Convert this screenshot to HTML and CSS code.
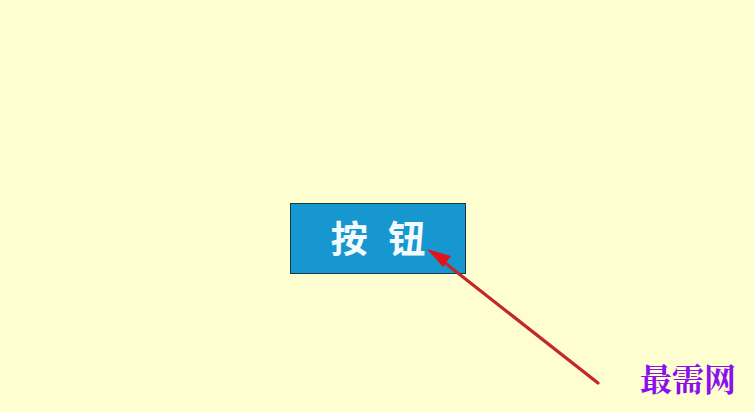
FILE: index.html
```html
<!DOCTYPE html>
<html lang="zh">
<head>
<meta charset="utf-8">
<link rel="stylesheet" href="styles.css">
</head>
<body>
<div class="canvas">
  <div class="button">按 钮</div>
  <svg class="arrow" width="754" height="412" viewBox="0 0 754 412">
    <line x1="598" y1="383" x2="440" y2="259" stroke="#c4262a" stroke-width="3.2" stroke-linecap="round"/>
    <polygon points="427,249 451,256 443,267" fill="#e0141c"/>
  </svg>
  <div class="mark">最需网</div>
</div>
</body>
</html>
```
FILE: styles.css
```css
html, body {
  margin: 0;
  padding: 0;
}
body {
  background: #fffed2;
}
.canvas {
  position: relative;
  width: 754px;
  height: 412px;
  box-sizing: border-box;
  padding: 203px 0 0 290px;
  background: #fefed1;
  overflow: hidden;
}
.button {
  width: 176px;
  height: 71px;
  box-sizing: border-box;
  border: 1px solid #1b3a48;
  background: #1797cf;
  color: #f4fbff;
  font-family: "Noto Sans CJK SC", sans-serif;
  font-weight: 700;
  font-size: 37px;
  line-height: 66px;
  text-align: center;
  letter-spacing: 6px;
  padding-left: 6px;
}
.arrow {
  position: absolute;
  left: 0;
  top: 0;
}
.mark {
  position: absolute;
  left: 640px;
  top: 357px;
  font-family: "Noto Serif CJK SC", "Noto Sans CJK SC", serif;
  font-weight: 700;
  font-size: 32px;
  line-height: 40px;
  color: #8a10f0;
}
```
